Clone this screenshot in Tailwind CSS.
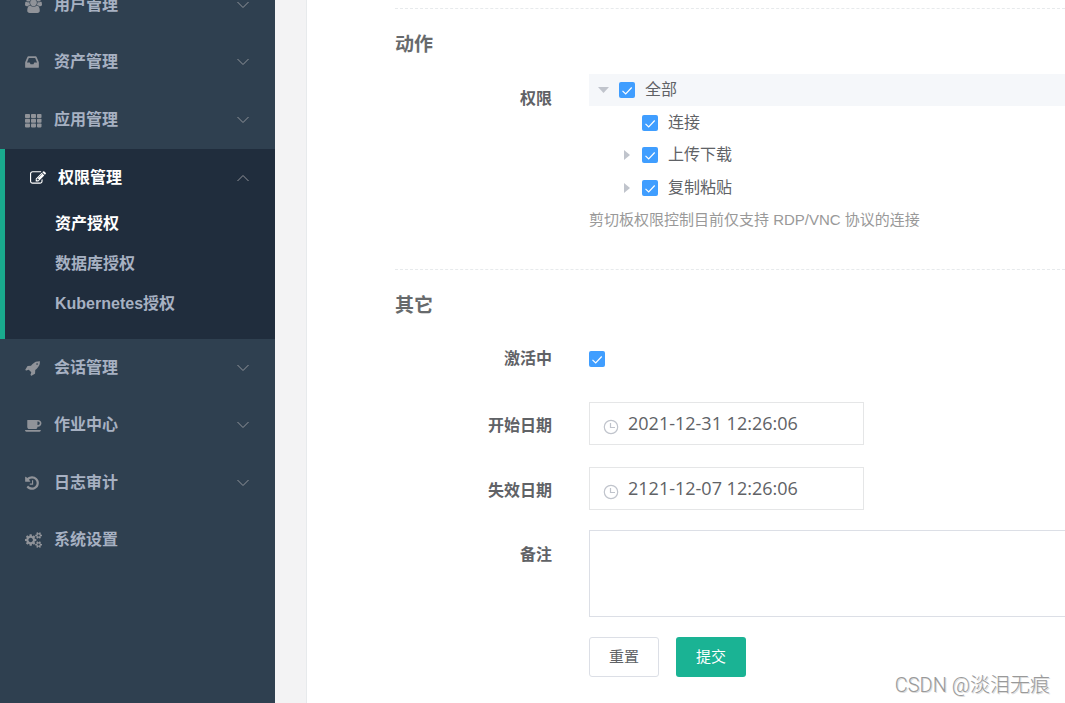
<!DOCTYPE html>
<html lang="zh-CN">
<head>
<meta charset="utf-8">
<meta name="viewport" content="width=device-width, initial-scale=1">
<title>资产授权</title>
<script src="https://cdn.jsdelivr.net/npm/@tailwindcss/browser@4"></script>
</head>
<body class="relative flex min-h-screen overflow-hidden bg-[#f3f3f4] font-['Liberation_Sans','Noto_Sans_CJK_SC',sans-serif] text-base text-[#606266]">

<svg class="hidden" aria-hidden="true">
  <symbol id="down" viewBox="0 0 12 12"><path d="M0.500 3l5.500 5.500L11.500 3" fill="none" stroke="currentColor"/></symbol>
  <symbol id="clock" viewBox="0 0 16 16"><circle cx="8" cy="8" r="6.700" fill="none" stroke="currentColor" stroke-width="1.200"/><path d="M7.500 4v4.500H12" fill="none" stroke="currentColor" stroke-width="1.200"/></symbol>
  <symbol id="tick" viewBox="0 0 16 16"><path d="M3.500 8.800l3.200 3.200 6-6.500" fill="none" stroke="currentColor" stroke-width="1.200"/></symbol>
</svg>

<nav class="w-[275px] shrink-0 bg-[#2f4050] font-bold text-[#a7b1c2]">
  <div class="-mt-6 grid h-[173px] grid-rows-3">
    <a href="#" class="flex items-center pr-[26px] pl-[25px]">
      <svg class="h-4 w-[17px] text-[#909399]" viewBox="0 0 1920 1792" fill="currentColor"><path d="M593 896q-162 5-265 128h-134q-82 0-138-40.500t-56-118.500q0-353 124-353 6 0 43.500 21t97.500 42.500 119 21.500q67 0 133-23-5 37-5 66 0 139 81 256zm1071 637q0 120-73 189.500t-194 69.500h-874q-121 0-194-69.500t-73-189.500q0-53 3.500-103.500t14-109 26.500-108.500 43-97.500 62-81 85.500-53.500 111.500-20q10 0 43 21.500t73 48 107 48 135 21.500 135-21.500 107-48 73-48 43-21.500q61 0 111.500 20t85.500 53.500 62 81 43 97.500 26.500 108.500 14 109 3.500 103.500zm-1024-1277q0 106-75 181t-181 75-181-75-75-181 75-181 181-75 181 75 75 181zm704 384q0 159-112.500 271.500t-271.500 112.500-271.500-112.500-112.500-271.500 112.500-271.500 271.500-112.500 271.500 112.500 112.500 271.500zm576 225q0 78-56 118.500t-138 40.500h-134q-103-123-265-128 81-117 81-256 0-29-5-66 66 23 133 23 59 0 119-21.500t97.500-42.500 43.500-21q124 0 124 353zm-128-609q0 106-75 181t-181 75-181-75-75-181 75-181 181-75 181 75 75 181z"/></svg>
      <span class="ml-3 flex-1">用户管理</span><svg class="size-3 text-[#909399]"><use href="#down"/></svg>
    </a>
    <a href="#" class="flex items-center pr-[26px] pl-[25px]">
      <svg class="h-4 w-[14px] text-[#909399]" viewBox="0 0 1536 1792" fill="currentColor"><path d="M1023 960h316q-1-3-2.500-8.500t-2.500-7.500l-212-496h-708l-212 496q-1 3-2.500 8.500t-2.500 7.500h316l95 192h320zm513 30v482q0 26-19 45t-45 19h-1408q-26 0-45-19t-19-45v-482q0-62 25-123l238-552q10-25 36.500-42t52.500-17h832q26 0 52.500 17t36.500 42l238 552q25 61 25 123z"/></svg>
      <span class="ml-[15px] flex-1">资产管理</span><svg class="size-3 text-[#909399]"><use href="#down"/></svg>
    </a>
    <a href="#" class="flex items-center pr-[26px] pl-[25px]">
      <svg class="h-4 w-[17px] text-[#909399]" viewBox="0 0 17 16" fill="currentColor"><g id="cells"><rect y="2" width="5" height="4" rx=".8"/><rect x="6" y="2" width="5" height="4" rx=".8"/><rect x="12" y="2" width="4.500" height="4" rx=".8"/></g><use href="#cells" y="4.700"/><use href="#cells" y="9.400"/></svg>
      <span class="ml-3 flex-1">应用管理</span><svg class="size-3 text-[#909399]"><use href="#down"/></svg>
    </a>
  </div>

  <div class="h-[190px] border-l-[5px] border-[#19aa8d] bg-[#202d3d]">
    <a href="#" class="flex h-[57px] items-center pr-[26px] pl-[25px] text-white">
      <svg class="h-4 w-4" viewBox="0 0 1792 1792" fill="currentColor"><path d="M888 1184l116-116-152-152-116 116v56h96v96h56zm440-720q-16-16-33 1l-350 350q-17 17-1 33t33-1l350-350q17-17 1-33zm80 594v190q0 119-84.500 203.500t-203.500 84.500h-832q-119 0-203.500-84.500t-84.500-203.500v-832q0-119 84.500-203.500t203.500-84.500h832q63 0 117 25 15 7 18 23 3 17-9 29l-49 49q-14 14-32 8-23-6-45-6h-832q-66 0-113 47t-47 113v832q0 66 47 113t113 47h832q66 0 113-47t47-113v-126q0-13 9-22l64-64q15-15 35-7t20 29zm-96-738l288 288-672 672h-288v-288zm444 132l-92 92-288-288 92-92q28-28 68-28t68 28l152 152q28 28 28 68t-28 68z"/></svg>
      <span class="ml-3 flex-1">权限管理</span><svg class="size-3 rotate-180 text-[#909399]"><use href="#down"/></svg>
    </a>
    <div class="flex flex-col pl-[50px] leading-10">
      <a href="#" class="-mt-0.5 text-white">资产授权</a>
      <a href="#">数据库授权</a>
      <a href="#">Kubernetes授权</a>
    </div>
  </div>

  <div class="grid h-[230px] grid-rows-4">
    <a href="#" class="flex items-center pr-[26px] pl-[25px]">
      <svg class="h-4 w-[15px] text-[#909399]" viewBox="0 0 1664 1792" fill="currentColor"><path d="M1440 448q0-40-28-68t-68-28-68 28-28 68 28 68 68 28 68-28 28-68zm224-288q0 249-75.500 430.500t-253.500 360.500q-81 80-195 176l-20 379q-2 16-16 26l-384 224q-7 4-16 4-12 0-23-9l-64-64q-13-14-8-32l85-276-281-281-276 85q-3 1-9 1-14 0-23-9l-64-64q-17-19-5-39l224-384q10-14 26-16l379-20q96-114 176-195 188-187 358-258t431-71q14 0 24 9.500t10 22.500z"/></svg>
      <span class="ml-[14px] flex-1">会话管理</span><svg class="size-3 text-[#909399]"><use href="#down"/></svg>
    </a>
    <a href="#" class="flex items-center pr-[26px] pl-[25px]">
      <svg class="h-4 w-[17px] text-[#909399]" viewBox="0 0 1920 1792" fill="currentColor"><path d="M1664 704q0-80-56-136t-136-56h-64v384h64q80 0 136-56t56-136zm-1664 768h1792q0 106-75 150t-181 42h-1280q-106 0-181-42t-75-150zm1856-768q0 159-112.500 271.500t-271.500 112.500h-64v32q0 92-66 158t-158 66h-704q-92 0-158-66t-66-158v-736q0-26 19-45t45-19h1152q159 0 271.500 112.500t112.500 271.500z"/></svg>
      <span class="ml-3 flex-1">作业中心</span><svg class="size-3 text-[#909399]"><use href="#down"/></svg>
    </a>
    <a href="#" class="flex items-center pr-[26px] pl-[25px]">
      <svg class="h-4 w-[14px] text-[#909399]" viewBox="0 0 1536 1792" fill="currentColor"><path d="M1536 896q0 156-61 298t-164 245-245 164-298 61q-172 0-327-72.500t-264-204.500q-7-10-6.500-22.500t8.500-20.500l137-138q10-9 25-9 16 2 23 12 73 95 179 147t225 52q104 0 198.500-40.500t163.500-109.500 109.500-163.500 40.500-198.500-40.500-198.500-109.500-163.500-163.500-109.500-198.500-40.500q-98 0-188 35.500t-160 101.500l137 138q31 30 14 69-17 40-59 40h-448q-26 0-45-19t-19-45v-448q0-42 40-59 39-17 69 14l130 129q107-101 244.500-156.500t284.500-55.500q156 0 298 61t245 164 164 245 61 298zm-640-288v448q0 14-9 23t-23 9h-320q-14 0-23-9t-9-23v-64q0-14 9-23t23-9h224v-352q0-14 9-23t23-9h64q14 0 23 9t9 23z"/></svg>
      <span class="ml-[15px] flex-1">日志审计</span><svg class="size-3 text-[#909399]"><use href="#down"/></svg>
    </a>
    <a href="#" class="flex items-center pr-[26px] pl-[25px]">
      <svg class="h-4 w-[17px] text-[#909399]" viewBox="0 0 1920 1792" fill="currentColor"><path d="M896 896q0-106-75-181t-181-75-181 75-75 181 75 181 181 75 181-75 75-181zm768 512q0-52-38-90t-90-38-90 38-38 90q0 53 37.500 90.500t90.500 37.500 90.500-37.500 37.500-90.500zm0-1024q0-52-38-90t-90-38-90 38-38 90q0 53 37.500 90.500t90.500 37.500 90.500-37.500 37.500-90.500zm-384 421v185q0 10-7 19.500t-16 10.500l-155 24q-11 35-32 76 34 48 90 115 7 10 7 20 0 12-7 19-23 30-82.500 89.500t-78.500 59.500q-11 0-21-7l-115-90q-37 19-77 31-11 108-23 155-7 24-30 24h-186q-11 0-20-7.500t-10-17.500l-23-153q-34-10-75-31l-118 89q-7 7-20 7-11 0-21-8-144-133-144-160 0-9 7-19 10-14 41-53t47-61q-23-44-35-82l-152-24q-10-1-17-9.500t-7-19.500v-185q0-10 7-19.500t16-10.500l155-24q11-35 32-76-34-48-90-115-7-11-7-20 0-12 7-20 22-30 82-89t79-59q11 0 21 7l115 90q34-18 77-32 11-108 23-154 7-24 30-24h186q11 0 20 7.500t10 17.500l23 153q34 10 75 31l118-89q8-7 20-7 11 0 21 8 144 133 144 160 0 9-7 19-12 16-42 54t-45 60q23 48 34 82l152 23q10 2 17 10.500t7 19.500zm640 533v140q0 16-149 31-12 27-30 52 51 113 51 138 0 4-4 7-122 71-124 71-8 0-46-47t-52-68q-20 2-30 2t-30-2q-14 21-52 68t-46 47q-2 0-124-71-4-3-4-7 0-25 51-138-18-25-30-52-149-15-149-31v-140q0-16 149-31 13-29 30-52-51-113-51-138 0-4 4-7 4-2 35-20t59-34 30-16q8 0 46 46.500t52 67.500q20-2 30-2t30 2q51-71 92-112l6-2q4 0 124 70 4 3 4 7 0 25-51 138 17 23 30 52 149 15 149 31zm0-1024v140q0 16-149 31-12 27-30 52 51 113 51 138 0 4-4 7-122 71-124 71-8 0-46-47t-52-68q-20 2-30 2t-30-2q-14 21-52 68t-46 47q-2 0-124-71-4-3-4-7 0-25 51-138-18-25-30-52-149-15-149-31v-140q0-16 149-31 13-29 30-52-51-113-51-138 0-4 4-7 4-2 35-20t59-34 30-16q8 0 46 46.500t52 67.500q20-2 30-2t30 2q51-71 92-112l6-2q4 0 124 70 4 3 4 7 0 25-51 138 17 23 30 52 149 15 149 31z"/></svg>
      <span class="ml-3 flex-1">系统设置</span>
    </a>
  </div>
</nav>

<main class="ml-[31px] min-w-0 flex-1 border-l border-[#e7eaec] bg-white pt-2 pl-[88px]">
  <form>
    <section class="border-t border-dashed border-[#e7eaec] pt-5">
      <h3 class="text-[19px] leading-8 font-bold text-[#676a6c]">动作</h3>
      <div class="mt-[13px] flex gap-[37px]">
        <div class="w-[157px] shrink-0 pt-[9px] text-right leading-8 font-bold">权限</div>
        <div class="min-w-0 flex-1">
          <ul>
            <li class="flex h-8 items-center bg-[#f5f7fa] pl-[9px]">
              <svg class="mr-[10px] h-[6px] w-[11px] text-[#c0c4cc]" viewBox="0 0 11 6" fill="currentColor"><path d="M0 0h11L5.500 6z"/></svg>
              <label class="flex items-center gap-[10px]"><span class="relative size-4"><input type="checkbox" checked class="block size-4 appearance-none rounded-xs bg-[#409eff]"><svg class="pointer-events-none absolute inset-0 size-4 text-white"><use href="#tick"/></svg></span>全部</label>
            </li>
            <li class="flex h-[33px] items-center pl-[53px]">
              <label class="flex items-center gap-[10px]"><span class="relative size-4"><input type="checkbox" checked class="block size-4 appearance-none rounded-xs bg-[#409eff]"><svg class="pointer-events-none absolute inset-0 size-4 text-white"><use href="#tick"/></svg></span>连接</label>
            </li>
            <li class="flex h-8 items-center pl-[35px]">
              <svg class="mr-3 h-[10px] w-[6px] text-[#c0c4cc]" viewBox="0 0 6 10" fill="currentColor"><path d="M0 0v10l6-5z"/></svg>
              <label class="flex items-center gap-[10px]"><span class="relative size-4"><input type="checkbox" checked class="block size-4 appearance-none rounded-xs bg-[#409eff]"><svg class="pointer-events-none absolute inset-0 size-4 text-white"><use href="#tick"/></svg></span>上传下载</label>
            </li>
            <li class="flex h-[33px] items-center pl-[35px]">
              <svg class="mr-3 h-[10px] w-[6px] text-[#c0c4cc]" viewBox="0 0 6 10" fill="currentColor"><path d="M0 0v10l6-5z"/></svg>
              <label class="flex items-center gap-[10px]"><span class="relative size-4"><input type="checkbox" checked class="block size-4 appearance-none rounded-xs bg-[#409eff]"><svg class="pointer-events-none absolute inset-0 size-4 text-white"><use href="#tick"/></svg></span>复制粘贴</label>
            </li>
          </ul>
          <p class="text-[15px] leading-8 text-[#999]">剪切板权限控制目前仅支持 RDP/VNC 协议的连接</p>
        </div>
      </div>
    </section>

    <section class="mt-[33px] border-t border-dashed border-[#e7eaec] pt-5">
      <h3 class="text-[19px] leading-8 font-bold text-[#676a6c]">其它</h3>
      <div class="mt-[17px] flex h-10 items-center gap-[37px]">
        <label for="active" class="w-[157px] shrink-0 text-right font-bold">激活中</label>
        <span class="relative size-4"><input id="active" type="checkbox" checked class="block size-4 appearance-none rounded-xs bg-[#409eff]"><svg class="pointer-events-none absolute inset-0 size-4 text-white"><use href="#tick"/></svg></span>
      </div>
      <div class="mt-[23px] flex items-center gap-[37px]">
        <label for="start" class="w-[157px] shrink-0 pt-1 text-right font-bold">开始日期</label>
        <div class="flex h-[43px] w-[275px] items-center border border-[#e5e6e7] pl-[13px]">
          <svg class="mt-1.5 size-4 shrink-0 text-[#c0c4cc]"><use href="#clock"/></svg>
          <input id="start" value="2021-12-31 12:26:06" class="ml-[9px] min-w-0 flex-1 font-['Open_Sans',sans-serif] text-[18px] outline-none">
        </div>
      </div>
      <div class="mt-[22px] flex items-center gap-[37px]">
        <label for="end" class="w-[157px] shrink-0 pt-1 text-right font-bold">失效日期</label>
        <div class="flex h-[43px] w-[275px] items-center border border-[#e5e6e7] pl-[13px]">
          <svg class="mt-1.5 size-4 shrink-0 text-[#c0c4cc]"><use href="#clock"/></svg>
          <input id="end" value="2121-12-07 12:26:06" class="ml-[9px] min-w-0 flex-1 font-['Open_Sans',sans-serif] text-[18px] outline-none">
        </div>
      </div>
      <div class="mt-5 flex gap-[37px]">
        <label for="note" class="w-[157px] shrink-0 pt-[9px] text-right leading-8 font-bold">备注</label>
        <textarea id="note" class="h-[87px] min-w-0 flex-1 resize-none border border-r-0 border-[#dcdfe6] px-4 py-2 outline-none"></textarea>
      </div>
      <div class="mt-5 flex gap-[17px] pl-[194px] text-[15px]">
        <button type="reset" class="h-10 w-[70px] rounded-[3px] border border-[#dcdfe6] bg-white">重置</button>
        <button type="submit" class="h-10 w-[70px] rounded-[3px] bg-[#1ab394] text-white">提交</button>
      </div>
    </section>
  </form>
</main>

<div class="absolute right-[15px] bottom-1 font-['Roboto','Noto_Sans_CJK_SC',sans-serif] text-xl font-light text-[#999] [text-shadow:1px_1px_0_#ddd]">CSDN @淡泪无痕</div>
</body>
</html>
